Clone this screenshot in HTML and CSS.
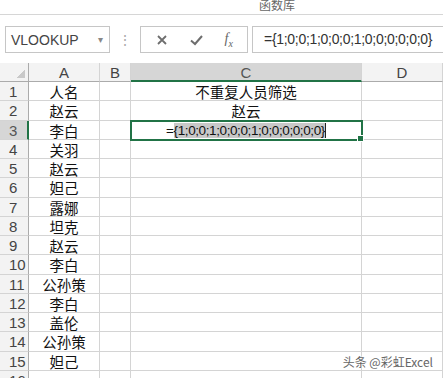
FILE: index.html
```html
<!DOCTYPE html>
<html lang="zh">
  <head>
    <meta charset="UTF-8" />
    <title>函数库</title>
    <link rel="stylesheet" href="styles.css">
  </head>
  <body>
    <div class="ribbon">函数库</div>

    <div class="formula-bar">
      <div class="name-box">
        <span>VLOOKUP</span>
        <span class="drop">&#9662;</span>
      </div>
      <div class="grip">&#8942;</div>
      <div class="fx-box">
        <svg width="14" height="14" viewBox="0 0 14 14"><path d="M3 3 L11 11 M11 3 L3 11" stroke="#6e6e6e" stroke-width="1.8" fill="none"/></svg>
        <svg width="15" height="14" viewBox="0 0 15 14"><path d="M2 7.5 L6 11 L13 3" stroke="#6e6e6e" stroke-width="2" fill="none"/></svg>
        <span class="fx">f<sub>x</sub></span>
      </div>
      <div class="formula">={1;0;0;1;0;0;0;1;0;0;0;0;0;0}</div>
    </div>

    <div class="sheet">
      <div class="corner"></div>
      <div class="col-head">A</div>
      <div class="col-head">B</div>
      <div class="col-head active">C</div>
      <div class="col-head">D</div>

      <div class="row-head">1</div><div class="cell">人名</div><div class="cell"></div><div class="cell">不重复人员筛选</div><div class="cell"></div>
      <div class="row-head">2</div><div class="cell">赵云</div><div class="cell"></div><div class="cell">赵云</div><div class="cell"></div>
      <div class="row-head active">3</div><div class="cell">李白</div><div class="cell"></div><div class="cell selected">=<span class="hl">{1;0;0;1;0;0;0;1;0;0;0;0;0;0}</span><span class="caret"></span></div><div class="cell"></div>
      <div class="row-head">4</div><div class="cell">关羽</div><div class="cell"></div><div class="cell"></div><div class="cell"></div>
      <div class="row-head">5</div><div class="cell">赵云</div><div class="cell"></div><div class="cell"></div><div class="cell"></div>
      <div class="row-head">6</div><div class="cell">妲己</div><div class="cell"></div><div class="cell"></div><div class="cell"></div>
      <div class="row-head">7</div><div class="cell">露娜</div><div class="cell"></div><div class="cell"></div><div class="cell"></div>
      <div class="row-head">8</div><div class="cell">坦克</div><div class="cell"></div><div class="cell"></div><div class="cell"></div>
      <div class="row-head">9</div><div class="cell">赵云</div><div class="cell"></div><div class="cell"></div><div class="cell"></div>
      <div class="row-head">10</div><div class="cell">李白</div><div class="cell"></div><div class="cell"></div><div class="cell"></div>
      <div class="row-head">11</div><div class="cell">公孙策</div><div class="cell"></div><div class="cell"></div><div class="cell"></div>
      <div class="row-head">12</div><div class="cell">李白</div><div class="cell"></div><div class="cell"></div><div class="cell"></div>
      <div class="row-head">13</div><div class="cell">盖伦</div><div class="cell"></div><div class="cell"></div><div class="cell"></div>
      <div class="row-head">14</div><div class="cell">公孙策</div><div class="cell"></div><div class="cell"></div><div class="cell"></div>
      <div class="row-head">15</div><div class="cell">妲己</div><div class="cell"></div><div class="cell"></div><div class="cell"></div>
      <div class="row-head">16</div><div class="cell"></div><div class="cell"></div><div class="cell"></div><div class="cell"></div>
    </div>

    <div class="watermark">头条 @彩虹Excel</div>
  </body>
</html>
```

FILE: styles.css
```css
body {
  margin: 0;
  width: 443px;
  height: 378px;
  overflow: hidden;
  background-color: #fff;
  font-family: "Liberation Sans", "Noto Sans CJK SC", sans-serif;
  color: #222;
  position: relative;
}

.ribbon {
  height: 14px;
  border-bottom: 1px solid #d6d6d6;
  font-family: "Noto Sans CJK SC", sans-serif;
  font-size: 12px;
  line-height: 10px;
  color: #666;
  padding-left: 259px;
}

.formula-bar {
  display: flex;
  align-items: center;
  height: 27px;
  margin-top: 11px;
  padding-left: 5px;
}

.name-box {
  display: flex;
  align-items: center;
  justify-content: space-between;
  width: 92px;
  height: 25px;
  border: 1px solid #c6c6c6;
  padding: 0 6px 0 5px;
  font-size: 14px;
  color: #444;
}

.drop {
  font-size: 10px;
  color: #888;
}

.grip {
  width: 30px;
  text-align: center;
  color: #aaa;
  font-size: 14px;
}

.fx-box {
  display: flex;
  align-items: center;
  justify-content: space-around;
  width: 108px;
  height: 27px;
  border: 1px solid #c6c6c6;
  padding: 0 4px;
  box-sizing: border-box;
}

.fx {
  font-family: "Liberation Serif", serif;
  font-style: italic;
  font-size: 14px;
  color: #666;
}

.fx sub {
  font-size: 10px;
}

.formula {
  flex: 1;
  height: 25px;
  margin-left: 4px;
  border: 1px solid #c6c6c6;
  border-right: none;
  padding-left: 11px;
  font-size: 14px;
  line-height: 25px;
  color: #333;
  letter-spacing: -0.3px;
}

.sheet {
  display: grid;
  grid-template-columns: 29px 71px 31px 231px 1fr;
  grid-template-rows: 19px repeat(16, 19.27px);
  margin-top: 10px;
}

.corner {
  background-color: #f3f3f3;
  border-right: 1px solid #ababab;
  border-bottom: 1px solid #ababab;
  background-image: linear-gradient(135deg, transparent 60%, #c9c9c9 60%);
  background-size: 11px 11px;
  background-position: right 3px bottom 3px;
  background-repeat: no-repeat;
}

.col-head {
  background-color: #f3f3f3;
  border-right: 1px solid #d4d4d4;
  border-bottom: 1px solid #ababab;
  text-align: center;
  font-size: 15px;
  line-height: 19px;
  color: #444;
}

.col-head.active {
  background-color: #d6d6d6;
  border-bottom: 2px solid #217346;
  color: #555;
}

.row-head {
  background-color: #f3f3f3;
  border-right: 1px solid #ababab;
  border-bottom: 1px solid #d4d4d4;
  padding-left: 9px;
  font-size: 15px;
  line-height: 19px;
  color: #444;
}

.row-head.active {
  background-color: #d6d6d6;
  border-right: 2px solid #217346;
  color: #555;
}

.cell {
  border-right: 1px solid #d4d4d4;
  border-bottom: 1px solid #d4d4d4;
  text-align: center;
  font-family: "Noto Sans CJK SC", sans-serif;
  font-size: 14.5px;
  line-height: 19px;
  color: #111;
  white-space: nowrap;
}

.cell.selected {
  position: relative;
  outline: 2px solid #217346;
  outline-offset: -1px;
  font-family: "Liberation Sans", sans-serif;
  font-size: 13.5px;
  letter-spacing: -0.4px;
}

.cell.selected::after {
  content: "";
  position: absolute;
  right: -3px;
  bottom: -3px;
  width: 5px;
  height: 5px;
  background-color: #217346;
  border: 1px solid #fff;
}

.hl {
  background-color: #c8c8c8;
}

.caret {
  display: inline-block;
  width: 1px;
  height: 15px;
  background-color: #222;
  vertical-align: -3px;
}

.watermark {
  position: absolute;
  right: 10px;
  bottom: 8px;
  font-family: "Noto Sans CJK SC", sans-serif;
  font-size: 12px;
  color: #666;
  text-shadow: 0 0 2px #fff, 0 0 2px #fff;
}
```
